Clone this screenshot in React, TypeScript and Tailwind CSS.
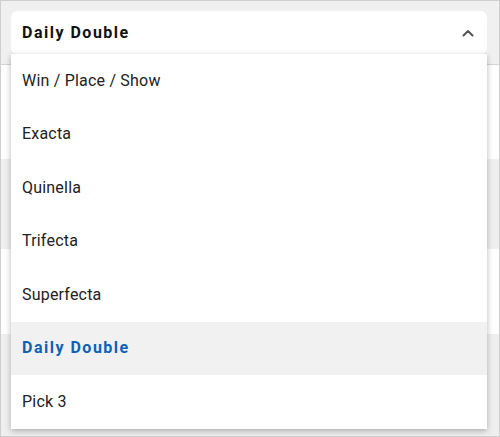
import React from "react";

const items = ["Win / Place / Show", "Exacta", "Quinella", "Trifecta", "Superfecta", "Daily Double", "Pick 3"];

export default function App() {
  return (
    <div className="relative w-[500px] h-[437px] overflow-hidden border border-[#cfcfcf] bg-white" style={{ fontFamily: "Roboto, 'Liberation Sans', sans-serif" }}>
      <div className="flex flex-col h-full">
        <div className="h-[64px] bg-[#f0f0f0] border-b border-[#d4d4d4] px-[10px] pt-[10px]">
          <div className="h-[43px] w-[476px] bg-white rounded-md flex items-center justify-between pl-[11px] pr-[13px]">
            <span className="text-[16px] font-bold tracking-[1.5px] text-[#111]">Daily Double</span>
            <svg width="12" height="8" viewBox="0 0 12 8" className="mt-[1px]">
              <path d="M1.5 6.5 L6 2 L10.5 6.5" fill="none" stroke="#555" strokeWidth="2" strokeLinecap="round" strokeLinejoin="round" />
            </svg>
          </div>
        </div>
        <div className="h-[94px] bg-white" />
        <div className="h-[90px] bg-[#efefef]" />
        <div className="h-[85px] bg-white" />
        <div className="flex-1 bg-[#efefef]" />
      </div>
      <div className="absolute left-[10px] top-[53px] w-[476px] bg-white shadow-[0_2px_6px_rgba(0,0,0,0.28)]">
        {items.map((it) => {
          const sel = it === "Daily Double";
          return (
            <div
              key={it}
              className={`h-[53.5px] flex items-center pl-[11px] text-[16px] ${sel ? "bg-[#f1f1f1] text-[#0a62b8] font-bold tracking-[1.5px]" : "text-[#222] tracking-[0.2px]"}`}
            >
              {it}
            </div>
          );
        })}
      </div>
    </div>
  );
}
